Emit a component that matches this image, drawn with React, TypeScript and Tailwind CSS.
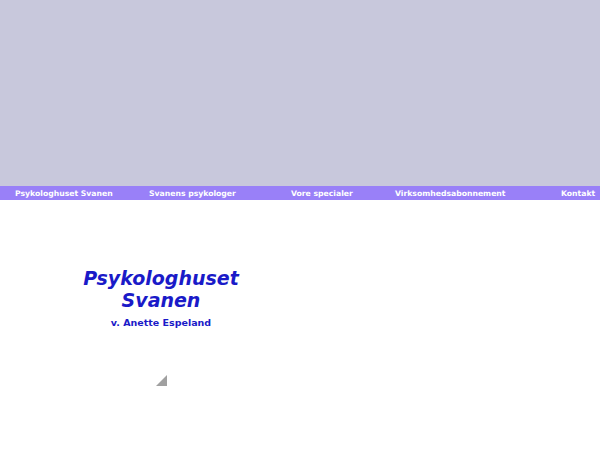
export default function App() {
  const nav = [
    { label: 'Psykologhuset Svanen', cls: 'w-[149px] pl-[15px]' },
    { label: 'Svanens psykologer', cls: 'w-[142px]' },
    { label: 'Vore specialer', cls: 'w-[104px]' },
    { label: 'Virksomhedsabonnement', cls: 'w-[166px]' },
    { label: 'Kontakt', cls: 'flex-1' },
  ]

  return (
    <div className="w-[600px] h-[450px] bg-white overflow-hidden font-['DejaVu_Sans',sans-serif]">
      {/* Header band */}
      <div className="h-[186px] bg-[#c8c8dc]" />

      {/* Nav bar */}
      <div className="h-[14px] bg-[#9980f8] flex items-center whitespace-nowrap pt-[2px]">
        {nav.map((n) => (
          <span key={n.label} className={`${n.cls} shrink-0 text-[7.7px] font-bold text-white leading-none`}>
            {n.label}
          </span>
        ))}
      </div>

      {/* Logo block */}
      <div className="w-[322px] flex flex-col items-center pt-[67px]">
        <h1 className="text-[19px] leading-[22px] font-bold italic text-[#1a1ac8] text-center">
          Psykologhuset
          <br />
          Svanen
        </h1>
        <p className="mt-[5px] text-[9.5px] font-bold text-[#1a1ac8]">v. Anette Espeland</p>
        <svg className="mt-[45px] ml-[1px]" width="12" height="11" viewBox="0 0 12 11">
          <polygon points="11,0 11,11 0,11" fill="#a0a0a0" />
        </svg>
      </div>
    </div>
  )
}
